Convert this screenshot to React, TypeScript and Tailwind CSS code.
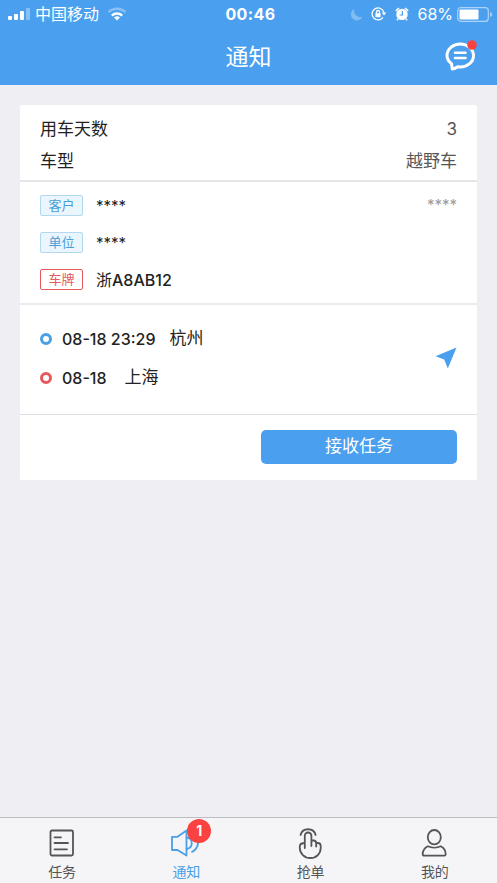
import type { ReactNode } from 'react';

function StatusBar() {
  return (
    <div className="grid h-7 grid-cols-[1fr_auto_1fr] items-center pr-1 pl-2 text-white">
      <div className="flex items-center">
        <svg width="22" height="12" viewBox="0 0 22 12" fill="currentColor" aria-hidden="true">
          <rect x="0" y="8" width="4" height="4" rx="1" />
          <rect x="6" y="6" width="4" height="6" rx="1" />
          <rect x="12" y="3" width="4" height="9" rx="1" />
          <rect x="18" y="0" width="4" height="12" rx="1" opacity="0.35" />
        </svg>
        <span className="ml-[5px] text-base leading-7">中国移动</span>
        <svg className="ml-2" width="20" height="14" viewBox="0 0 20 14" fill="none" stroke="currentColor" strokeWidth="2.4" aria-hidden="true">
          <path d="M1.6 5.2a12 12 0 0 1 16.8 0" opacity="0.35" />
          <path d="M4.800 8.600a7.400 7.400 0 0 1 10.400 0" />
          <path d="M10 13.400 7 10.600a4.300 4.300 0 0 1 6 0Z" fill="currentColor" stroke="none" />
        </svg>
      </div>
      <span className="text-base leading-7 font-bold tracking-wide">00:46</span>
      <div className="flex items-center justify-end">
        <svg width="13" height="13" viewBox="0 0 13 13" fill="currentColor" opacity="0.3" aria-hidden="true">
          <path d="M4 .8A6.200 6.200 0 1 0 12.600 9 7 7 0 0 1 4 .8Z" />
        </svg>
        <svg className="ml-2" width="16" height="14" viewBox="0 0 16 14" fill="none" stroke="currentColor" strokeWidth="1.300" aria-hidden="true">
          <path d="M12.900 5.500A6 6 0 1 0 12 10.400" />
          <path d="M10.700 5.600h4.600L13 8.600Z" fill="currentColor" stroke="none" />
          <rect x="4.400" y="6.200" width="5.200" height="4" fill="currentColor" stroke="none" />
          <path d="M5.500 6.400V5a1.500 1.500 0 0 1 3 0v1.400" />
        </svg>
        <svg className="ml-2" width="14" height="14" viewBox="0 0 14 14" fill="currentColor" aria-hidden="true">
          <circle cx="7" cy="7.400" r="5.700" />
          <path d="M.8 3.800 4 1M13.200 3.800 10 1M3 12l-1 1.300M11 12l1 1.300" stroke="currentColor" strokeWidth="1.600" />
          <path d="M7.400 4v4H4.600" fill="none" stroke="#4a9fef" strokeWidth="1.200" />
        </svg>
        <span className="ml-2 text-base leading-7">68%</span>
        <svg className="ml-1" width="36" height="15" viewBox="0 0 36 15" fill="none" aria-hidden="true">
          <rect x=".7" y=".7" width="30.600" height="13.600" rx="3" stroke="#fff" strokeWidth="1.200" opacity="0.55" />
          <rect x="2.500" y="2.500" width="19" height="10" rx="1" fill="#fff" />
          <path d="M33 5v5c1.600-.5 2.200-1.400 2.200-2.500S34.600 5.500 33 5Z" fill="#fff" opacity="0.5" />
        </svg>
      </div>
    </div>
  );
}

function Header() {
  return (
    <header className="bg-[#4a9fef]">
      <StatusBar />
      <div className="grid h-[57px] grid-cols-[1fr_auto_1fr] items-center px-5 text-white">
        <h1 className="col-start-2 text-[23px] leading-8">通知</h1>
        <button type="button" aria-label="消息" className="justify-self-end">
          <svg width="34" height="33" viewBox="-1 0 34 33" fill="none" stroke="#fff" strokeWidth="3" strokeLinejoin="round" strokeLinecap="round">
            <path d="M7.500 23.600C4.600 21.500 3 18.600 3 15.500 3 9 9 4 16.300 4s13.200 5 13.200 11.500S23.600 27 16.300 27c-.9 0-1.700 0-2.500-.2-1.700 1.300-3.400 2-5.500 2.200Z" />
            <path d="M11 12.800h10.500M11 18h10.500" strokeWidth="2.600" />
            <circle cx="28" cy="5" r="4.800" fill="#fa4241" stroke="none" />
          </svg>
        </button>
      </div>
    </header>
  );
}

function InfoRow({ label, value }: { label: string; value: string }) {
  return (
    <div className="flex h-8 items-center justify-between text-[17px] leading-8">
      <dt className="text-[#222]">{label}</dt>
      <dd className="text-[#555]">{value}</dd>
    </div>
  );
}

function TagRow({ tag, red, children, extra }: { tag: string; red?: boolean; children: ReactNode; extra?: string }) {
  return (
    <div className="flex h-[37px] items-center text-[#222]">
      <span
        className={
          'flex h-[21px] w-[43px] items-center justify-center rounded-xs border text-[13px] ' +
          (red ? 'border-[#e4595c] text-[#e4595c]' : 'border-[#b3d9ef] bg-[#eaf5fd] text-[#4a9fd8]')
        }
      >
        {tag}
      </span>
      <span className="ml-[13px]">{children}</span>
      {extra && <span className="ml-auto text-[15px] text-[#999]">{extra}</span>}
    </div>
  );
}

function Stop({ time, place, color, gap }: { time: string; place: string; color: string; gap: string }) {
  return (
    <li className="flex h-[39px] items-center text-[#222]">
      <span className={'size-3 rounded-full border-3 ' + color} />
      <span className="ml-[10px] text-base font-medium">{time}</span>
      <span className={'text-[17px] ' + gap}>{place}</span>
    </li>
  );
}

function TaskCard() {
  return (
    <article className="mx-5 mt-5 rounded-xs bg-white">
      <dl className="border-b-2 border-[#e5e5e7] px-5 pt-2 pb-[3px]">
        <InfoRow label="用车天数" value="3" />
        <InfoRow label="车型" value="越野车" />
      </dl>
      <div className="border-b-2 border-[#ebebed] px-5 py-[5px]">
        <TagRow tag="客户" extra="****">
          <span className="text-[15px]">****</span>
        </TagRow>
        <TagRow tag="单位">
          <span className="text-[15px]">****</span>
        </TagRow>
        <TagRow tag="车牌" red>
          浙<span className="font-medium">A8AB12</span>
        </TagRow>
      </div>
      <div className="flex items-center justify-between border-b border-[#e0e0e2] px-5 pt-[14px] pb-[17px]">
        <ul>
          <Stop time="08-18 23:29" place="杭州" color="border-[#4a9fe5]" gap="ml-[14px]" />
          <Stop time="08-18" place="上海" color="border-[#e4595c]" gap="ml-[18px]" />
        </ul>
        <button type="button" aria-label="导航">
          <svg width="22" height="22" viewBox="0 0 22 22" fill="#4a9fef">
            <path d="M21.500.500 12.800 21.500 9.200 12.600.500 9.200Z" />
          </svg>
        </button>
      </div>
      <div className="flex justify-end px-5 pt-[15px] pb-4">
        <button type="button" className="h-[34px] w-[47%] rounded-[5px] bg-[#4a9fef] text-[17px] text-white">
          接收任务
        </button>
      </div>
    </article>
  );
}

function Tab({ label, active, badge, children }: { label: string; active?: boolean; badge?: string; children: ReactNode }) {
  return (
    <button
      type="button"
      aria-current={active ? 'page' : undefined}
      className={'flex flex-1 flex-col items-center pt-[9px] text-sm leading-5 ' + (active ? 'text-[#4a9fe5]' : 'text-[#555]')}
    >
      <span className="relative">
        <svg width="32" height="34" viewBox="0 0 32 34" fill="none" stroke="currentColor" strokeWidth="1.800" strokeLinecap="round" strokeLinejoin="round" aria-hidden="true">
          {children}
        </svg>
        {badge && (
          <span className="absolute -top-2 left-[17px] flex size-6 items-center justify-center rounded-full bg-[#fa4241] text-sm font-bold text-white">
            {badge}
          </span>
        )}
      </span>
      <span className="mt-px">{label}</span>
    </button>
  );
}

function TabBar() {
  return (
    <nav className="flex h-[66px] border-t border-[#bdbdc1] bg-[#f5f5f8]">
      <Tab label="任务">
        <rect x="4.500" y="3.500" width="22.500" height="25" rx="1.500" />
        <path d="M8.500 10.300h6.500M8.500 16h13.500M8.500 22.300h12.500" />
      </Tab>
      <Tab label="通知" active badge="1">
        <path d="M2 9.800h5.500L16.500 3.500v25L7.500 23H2Z" />
        <path d="M16.500 10.500c7 .5 7 10.500 0 11.500M28 8c2 7-1 15-6 16.800" />
      </Tab>
      <Tab label="抢单">
        <path d="M9.800 21V8.800a3.300 3.300 0 0 1 6.600 0V19M16.400 13.500h2.100a2.700 2.700 0 0 1 2.700 2.700V19.500M21.200 16h1.600a2.900 2.900 0 0 1 2.900 2.900V21c0 5.500-4.300 10-10.300 10S4.800 26.500 4.800 21v-1.500c0-2.300 1.800-3.500 5-3.500" />
        <path d="M5.600 8C7.500.300 18.700.300 20.600 8" />
      </Tab>
      <Tab label="我的">
        <ellipse cx="15.300" cy="10.200" rx="6.500" ry="7.200" />
        <path d="M8.900 19.200c3.600 1.800 9.200 1.800 12.800 0 3 1.500 5 5 5 8 0 1-.5 1.500-1.500 1.500H5.200c-1 0-1.500-.5-1.500-1.500 0-3 2.200-6.500 5.200-8Z" />
      </Tab>
    </nav>
  );
}

export default function App() {
  return (
    <div className="flex min-h-screen flex-col bg-[#eeeef3] font-['Inter','Noto_Sans_CJK_SC',sans-serif]">
      <Header />
      <main className="flex-1">
        <TaskCard />
      </main>
      <TabBar />
    </div>
  );
}
